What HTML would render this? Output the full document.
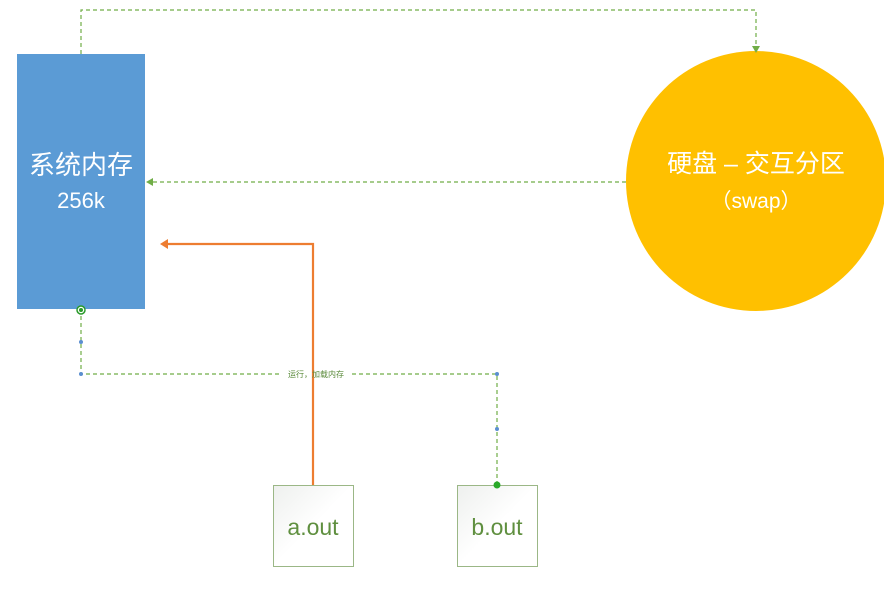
<!DOCTYPE html><html><head><style>body{margin:0;background:#fff}</style></head><body>
<svg width="884" height="598" xmlns="http://www.w3.org/2000/svg" style="display:block;font-family:'Liberation Sans','Noto Sans CJK SC',sans-serif">
<defs><linearGradient id="g" x1="0" y1="0" x2="1" y2="1"><stop offset="0" stop-color="#eef0ee"/><stop offset="0.5" stop-color="#fff"/></linearGradient></defs>
<rect x="17" y="54" width="128" height="255" fill="#5b9bd5"/>
<text x="81" y="174" fill="#fff" font-size="26" text-anchor="middle">系统内存</text>
<text x="81" y="208" fill="#fff" font-size="22" text-anchor="middle">256k</text>
<circle cx="756" cy="181" r="130" fill="#ffc000"/>
<text x="756" y="172" fill="#fff" font-size="25" text-anchor="middle">硬盘 – 交互分区</text>
<text x="756" y="208" fill="#fff" font-size="21" text-anchor="middle">（swap）</text>
<g fill="none" stroke="#70ad47" stroke-width="1.2" stroke-dasharray="4,3">
<path d="M81 54V10H756V48"/><path d="M626 182H152"/><path d="M497 485V374H81V316"/></g>
<path d="M752 46L756 53L760 46Z" fill="#70ad47"/>
<path d="M153 178L146 182L153 186Z" fill="#70ad47"/>
<rect x="280" y="369" width="72" height="9" fill="#fff"/>
<path d="M313 485V244H166" fill="none" stroke="#ed7d31" stroke-width="2.2"/>
<path d="M168 239L160 244L168 249Z" fill="#ed7d31"/>
<circle cx="81" cy="310" r="4" fill="#fff" stroke="#2a9a2a" stroke-width="1.5"/><circle cx="81" cy="310" r="2" fill="#2a9a2a"/>
<g fill="#5b8fd0"><circle cx="81" cy="342" r="2"/><circle cx="81" cy="374" r="2"/><circle cx="497" cy="374" r="2"/><circle cx="497" cy="429" r="2"/></g>
<text x="316" y="377" fill="#5a8a3a" font-size="8" text-anchor="middle">运行，加载内存</text>
<rect x="273.5" y="485.5" width="80" height="81" fill="url(#g)" stroke="#9bb786"/>
<rect x="457.5" y="485.5" width="80" height="81" fill="url(#g)" stroke="#9bb786"/>
<text x="313" y="535" fill="#5f8f3f" font-size="23" text-anchor="middle">a.out</text>
<text x="497" y="535" fill="#5f8f3f" font-size="23" text-anchor="middle">b.out</text>
<circle cx="497" cy="485" r="3.5" fill="#2aaa2a"/>
</svg></body></html>
